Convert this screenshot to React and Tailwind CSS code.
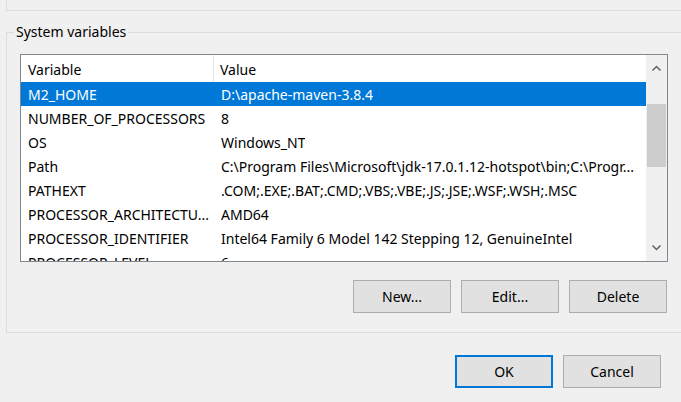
import React from 'react';

const rows = [
    ['M2_HOME', 'D:\\apache-maven-3.8.4'],
    ['NUMBER_OF_PROCESSORS', '8'],
    ['OS', 'Windows_NT'],
    ['Path', 'C:\\Program Files\\Microsoft\\jdk-17.0.1.12-hotspot\\bin;C:\\Progr...'],
    ['PATHEXT', '.COM;.EXE;.BAT;.CMD;.VBS;.VBE;.JS;.JSE;.WSF;.WSH;.MSC'],
    ['PROCESSOR_ARCHITECTU...', 'AMD64'],
    ['PROCESSOR_IDENTIFIER', 'Intel64 Family 6 Model 142 Stepping 12, GenuineIntel'],
    ['PROCESSOR_LEVEL', '6'],
];

const Button = ({ children, primary }) => (
    <button
        className={
            primary
                ? 'w-[98px] h-[33px] bg-[#e1e1e1] border-2 border-[#0078d7] text-black'
                : 'w-[98px] h-[33px] bg-[#e1e1e1] border border-[#adadad] text-black'
        }
    >
        {children}
    </button>
);

export default function App() {
    return (
        <div
            className="w-[681px] h-[402px] overflow-hidden bg-[#f0f0f0] text-[14px] text-black"
            style={{ fontFamily: '"Noto Sans", "Open Sans", sans-serif' }}
        >
            {/* previous group box (bottom edge only) */}
            <div className="ml-[6px] w-[700px] h-[11px] border-l border-b border-[#dcdcdc]" />

            {/* System variables group */}
            <div className="relative ml-[6px] mt-[21px] w-[700px] h-[301px] border-l border-t border-b border-[#dcdcdc]">
                <span className="absolute left-[7px] -top-[12px] px-[2px] bg-[#f0f0f0] leading-[22px]">System variables</span>

                {/* list view */}
                <div className="ml-[13px] mt-[21px] w-[648px] h-[208px] border border-[#828790] bg-white flex">
                    <div className="flex-1 overflow-hidden">
                        <div className="flex h-[27px] items-center leading-none">
                            <div className="w-[193px] h-full pl-[7px] pt-[2px] flex items-center border-r border-[#e5e5e5]">Variable</div>
                            <div className="pl-[6px] pt-[2px]">Value</div>
                        </div>
                        {rows.map(([name, value], i) => (
                            <div
                                key={name}
                                className={
                                    i === 0
                                        ? 'flex h-[24px] items-center bg-[#0078d7] text-white whitespace-nowrap'
                                        : 'flex h-[24px] items-center whitespace-nowrap'
                                }
                            >
                                <div className="w-[194px] pl-[7px] overflow-hidden">{name}</div>
                                <div className="pl-[6px] overflow-hidden">{value}</div>
                            </div>
                        ))}
                    </div>

                    {/* scrollbar */}
                    <div className="w-[21px] bg-[#f0f0f0] flex flex-col items-center">
                        <svg width="21" height="24" viewBox="0 0 21 24" className="mt-[1px]">
                            <path d="M6.5 14.5 L10.5 10.5 L14.5 14.5" fill="none" stroke="#606060" strokeWidth="1.5" />
                        </svg>
                        <div className="mt-[24px] w-[19px] h-[63px] bg-[#cdcdcd]" />
                        <div className="flex-1" />
                        <svg width="21" height="24" viewBox="0 0 21 24" className="mb-[1px]">
                            <path d="M6.5 9.5 L10.5 13.5 L14.5 9.5" fill="none" stroke="#606060" strokeWidth="1.5" />
                        </svg>
                    </div>
                </div>

                <div className="ml-[13px] mt-[18px] w-[647px] flex justify-end gap-[10px]">
                    <Button>New...</Button>
                    <Button>Edit...</Button>
                    <Button>Delete</Button>
                </div>
            </div>

            <div className="mt-[22px] pr-[20px] flex justify-end gap-[10px]">
                <Button primary>OK</Button>
                <Button>Cancel</Button>
            </div>
        </div>
    );
}
